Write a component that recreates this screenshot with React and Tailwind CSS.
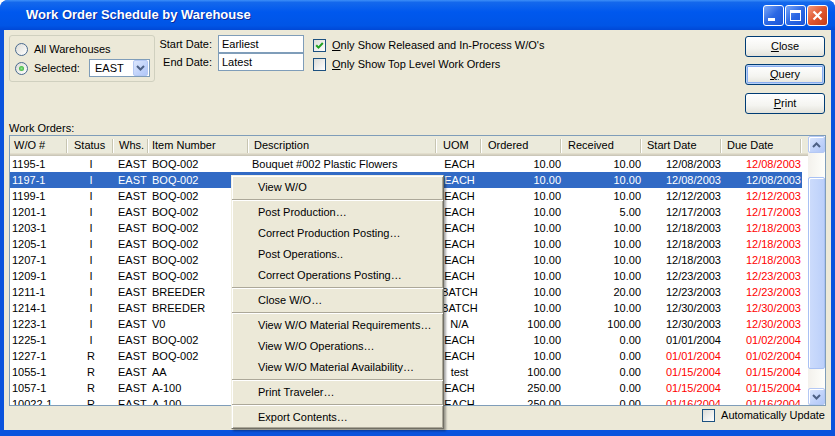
import React from 'react';

const rows = [
  ['1195-1', 'I', 'BOQ-002', 'Bouquet #002 Plastic Flowers', 'EACH', '10.00', '10.00', '12/08/2003', '12/08/2003', false],
  ['1197-1', 'I', 'BOQ-002', '', 'EACH', '10.00', '10.00', '12/08/2003', '12/08/2003', false],
  ['1199-1', 'I', 'BOQ-002', '', 'EACH', '10.00', '10.00', '12/12/2003', '12/12/2003', false],
  ['1201-1', 'I', 'BOQ-002', '', 'EACH', '10.00', '5.00', '12/17/2003', '12/17/2003', false],
  ['1203-1', 'I', 'BOQ-002', '', 'EACH', '10.00', '10.00', '12/18/2003', '12/18/2003', false],
  ['1205-1', 'I', 'BOQ-002', '', 'EACH', '10.00', '10.00', '12/18/2003', '12/18/2003', false],
  ['1207-1', 'I', 'BOQ-002', '', 'EACH', '10.00', '10.00', '12/18/2003', '12/18/2003', false],
  ['1209-1', 'I', 'BOQ-002', '', 'EACH', '10.00', '10.00', '12/23/2003', '12/23/2003', false],
  ['1211-1', 'I', 'BREEDER', '', 'BATCH', '10.00', '20.00', '12/23/2003', '12/23/2003', false],
  ['1214-1', 'I', 'BREEDER', '', 'BATCH', '10.00', '10.00', '12/30/2003', '12/30/2003', false],
  ['1223-1', 'I', 'V0', '', 'N/A', '100.00', '100.00', '12/30/2003', '12/30/2003', false],
  ['1225-1', 'I', 'BOQ-002', '', 'EACH', '10.00', '0.00', '01/01/2004', '01/02/2004', false],
  ['1227-1', 'R', 'BOQ-002', '', 'EACH', '10.00', '0.00', '01/01/2004', '01/02/2004', true],
  ['1055-1', 'R', 'AA', '', 'test', '100.00', '0.00', '01/15/2004', '01/15/2004', true],
  ['1057-1', 'R', 'A-100', '', 'EACH', '250.00', '0.00', '01/15/2004', '01/15/2004', true],
  ['10022-1', 'R', 'A-100', '', 'EACH', '250.00', '0.00', '01/16/2004', '01/16/2004', true],
];

const headers = [
  ['W/O #', 'w-[58px] pl-[4px]'],
  ['Status', 'w-[46px] pl-[6px]'],
  ['Whs.', 'w-[35px] pl-[5px]'],
  ['Item Number', 'w-[100px] pl-[3px]'],
  ['Description', 'w-[188px] pl-[5px]'],
  ['UOM', 'w-[45px] pl-[6px]'],
  ['Ordered', 'w-[80px] pl-[6px]'],
  ['Received', 'w-[80px] pl-[6px]'],
  ['Start Date', 'w-[80px] pl-[5px]'],
  ['Due Date', 'w-[80px] pl-[5px]'],
];

function Check({ checked }) {
  return (
    <span className="flex h-[13px] w-[13px] shrink-0 items-center justify-center border border-[#1c5180] bg-[linear-gradient(135deg,#dcdcd7,#ffffff)]">
      {checked && (
        <svg viewBox="0 0 11 11" className="h-[11px] w-[11px]">
          <path d="M2.2 5.2 L4.5 7.6 L8.8 3" stroke="#21a121" strokeWidth="2" fill="none" />
        </svg>
      )}
    </span>
  );
}

function Radio({ checked }) {
  return (
    <span className="flex h-[13px] w-[13px] shrink-0 items-center justify-center rounded-full border border-[#4a6a8f] bg-[linear-gradient(135deg,#dcdcd7,#ffffff)]">
      {checked && <span className="h-[5px] w-[5px] rounded-full bg-[radial-gradient(circle,#8ee68e,#21a121)]" />}
    </span>
  );
}

function XpButton({ children, focused }) {
  return (
    <div
      className={`flex h-[21px] w-[80px] items-center justify-center rounded-[3px] border border-[#003c74] bg-[linear-gradient(to_bottom,#ffffff,#f4f4f0_60%,#e3e2da)] text-[11px] text-black ${
        focused ? 'shadow-[inset_0_0_0_1px_#b9d1f6,inset_0_0_0_2px_#89adf0]' : ''
      }`}
    >
      {children}
    </div>
  );
}

function ArrowBtn({ up }) {
  return (
    <div className="flex h-[17px] w-[17px] shrink-0 items-center justify-center rounded-[2px] border border-[#b4c8f4] bg-[linear-gradient(135deg,#dbe6fd,#c0d2fa_60%,#b1c7f8)] shadow-[inset_1px_1px_0_#ffffff]">
      <svg viewBox="0 0 9 6" className="h-[6px] w-[9px]">
        <path d={up ? 'M1 5 L4.5 1.5 L8 5' : 'M1 1 L4.5 4.5 L8 1'} stroke="#4d6185" strokeWidth="2" fill="none" />
      </svg>
    </div>
  );
}

function MenuItem({ children }) {
  return <div className="h-[21px] pl-[26px] leading-[21px] whitespace-nowrap">{children}</div>;
}

function MenuSep() {
  return (
    <div className="flex h-[4px] flex-col justify-center">
      <div className="h-[1px] bg-[#aca899]" />
      <div className="h-[1px] bg-white" />
    </div>
  );
}

export default function App() {
  return (
    <div className="relative h-[436px] w-[835px] overflow-hidden bg-white font-['Liberation_Sans',Arial,sans-serif] text-[11px] text-black">
      <div className="flex h-full w-full flex-col overflow-hidden rounded-t-[8px] bg-[#0a53dd]">
        {/* Title bar */}
        <div className="flex h-[30px] shrink-0 items-center bg-[linear-gradient(to_bottom,#3d8ff8_0%,#1468ec_8%,#0058ee_40%,#0055e6_85%,#0048d6_100%)]">
          <div className="pl-[26px] text-[13px] font-bold text-white [text-shadow:1px_1px_0_#0a2a9a]">
            Work Order Schedule by Warehouse
          </div>
          <div className="ml-auto flex gap-[1px] pr-[7px]">
            <div className="flex h-[21px] w-[21px] items-end rounded-[3px] border border-white bg-[linear-gradient(135deg,#7aa7f8,#2c68e4_50%,#1b55d8)] pb-[4px] pl-[4px]">
              <span className="h-[3px] w-[7px] bg-white" />
            </div>
            <div className="flex h-[21px] w-[21px] items-center justify-center rounded-[3px] border border-white bg-[linear-gradient(135deg,#7aa7f8,#2c68e4_50%,#1b55d8)]">
              <span className="h-[11px] w-[11px] border border-t-[3px] border-white" />
            </div>
            <div className="flex h-[21px] w-[21px] items-center justify-center rounded-[3px] border border-white bg-[linear-gradient(135deg,#f29a7d,#e1572f_50%,#c63d17)]">
              <svg viewBox="0 0 11 11" className="h-[11px] w-[11px]">
                <path d="M1.5 1.5 L9.5 9.5 M9.5 1.5 L1.5 9.5" stroke="#ffffff" strokeWidth="2.2" fill="none" />
              </svg>
            </div>
          </div>
        </div>

        {/* Client */}
        <div className="flex flex-1 flex-col px-[4px] pb-[6px]">
          <div className="flex flex-1 flex-col bg-[#ece9d8]">
            {/* Top controls */}
            <div className="flex h-[91px] shrink-0 items-start pl-[5px] pr-[6px]">
              <div className="mt-[5px] flex h-[47px] w-[146px] flex-col rounded-[3px] border border-[#d0d0bf] pl-[5px] pr-[4px] pt-[4px]">
                <div className="flex h-[18px] items-center">
                  <Radio />
                  <span className="ml-[6px]">All Warehouses</span>
                </div>
                <div className="flex h-[20px] items-center">
                  <Radio checked />
                  <span className="ml-[6px]">Selected:</span>
                  <div className="ml-auto flex h-[18px] w-[61px] items-center border border-[#7f9db9] bg-white">
                    <span className="pl-[5px]">EAST</span>
                    <div className="ml-auto mr-[1px] flex h-[16px] w-[15px] items-center justify-center rounded-[2px] border border-[#b4c8f4] bg-[linear-gradient(135deg,#dbe6fd,#c0d2fa_60%,#b1c7f8)]">
                      <svg viewBox="0 0 9 6" className="h-[6px] w-[9px]">
                        <path d="M1 1 L4.5 4.5 L8 1" stroke="#4d6185" strokeWidth="2" fill="none" />
                      </svg>
                    </div>
                  </div>
                </div>
              </div>

              <div className="mt-[5px] flex flex-col">
                <div className="flex h-[18px] items-center">
                  <span className="w-[57px] text-right">Start Date:</span>
                  <div className="ml-[6px] flex h-[18px] w-[86px] items-center border border-[#7f9db9] bg-white pl-[3px]">Earliest</div>
                </div>
                <div className="flex h-[18px] items-center">
                  <span className="w-[57px] text-right">End Date:</span>
                  <div className="ml-[6px] flex h-[18px] w-[86px] items-center border border-[#7f9db9] bg-white pl-[3px]">Latest</div>
                </div>
              </div>

              <div className="ml-[9px] mt-[6px] flex flex-col">
                <div className="flex h-[19px] items-center">
                  <Check checked />
                  <span className="ml-[6px]">
                    <span className="underline">O</span>nly Show Released and In-Process W/O's
                  </span>
                </div>
                <div className="flex h-[19px] items-center">
                  <Check />
                  <span className="ml-[6px]">
                    <span className="underline">O</span>nly Show Top Level Work Orders
                  </span>
                </div>
              </div>

              <div className="ml-auto flex flex-col">
                <div className="mt-[6px]">
                  <XpButton>
                    <span className="underline">C</span>lose
                  </XpButton>
                </div>
                <div className="mt-[7px]">
                  <XpButton focused>
                    <span className="underline">Q</span>uery
                  </XpButton>
                </div>
                <div className="mt-[8px]">
                  <XpButton>
                    <span className="underline">P</span>rint
                  </XpButton>
                </div>
              </div>
            </div>

            <div className="h-[14px] shrink-0 pl-[5px] leading-[14px]">Work Orders:</div>

            {/* Table */}
            <div className="ml-[5px] flex h-[271px] w-[817px] shrink-0 border border-[#7f9db9] bg-white">
              <div className="flex w-[798px] flex-col overflow-hidden">
                <div className="flex h-[20px] shrink-0 bg-[#ebeadb] shadow-[inset_0_-1px_0_#cbc7b8,inset_0_-2px_0_#d6d2c2,inset_0_-3px_0_#e2decd]">
                  {headers.map(([label, cls]) => (
                    <div key={label} className={`flex h-[20px] shrink-0 items-center pb-[2px] ${cls}`}>
                      <span className="whitespace-nowrap">{label}</span>
                      <span className="ml-auto mt-[2px] flex h-[14px]">
                        <span className="w-[1px] bg-[#c7c5b2]" />
                        <span className="w-[1px] bg-white" />
                      </span>
                    </div>
                  ))}
                </div>
                <div className="flex flex-col">
                  {rows.map((r, i) => {
                    const sel = i === 1;
                    return (
                      <div key={r[0]} className={`flex h-[16px] shrink-0 leading-[16px] ${sel ? 'text-white' : 'text-black'}`}>
                        <div className={`flex w-[792px] ${sel ? 'bg-[#316ac5]' : ''}`}>
                          <span className="w-[58px] shrink-0 whitespace-nowrap pl-[2px]">{r[0]}</span>
                          <span className="w-[46px] shrink-0 text-center">{r[1]}</span>
                          <span className="w-[35px] shrink-0 pl-[4px]">EAST</span>
                          <span className="w-[100px] shrink-0 whitespace-nowrap pl-[3px]">{r[2]}</span>
                          <span className="w-[188px] shrink-0 overflow-hidden whitespace-nowrap pl-[3px]">{r[3]}</span>
                          <span className="w-[45px] shrink-0 text-center">{r[4]}</span>
                          <span className="w-[80px] shrink-0 pr-[1px] text-right">{r[5]}</span>
                          <span className="w-[80px] shrink-0 pr-[1px] text-right">{r[6]}</span>
                          <span className={`w-[80px] shrink-0 pr-[1px] text-right ${!sel && r[9] ? 'text-[#ff0000]' : ''}`}>{r[7]}</span>
                          <span className={`w-[80px] shrink-0 pr-[1px] text-right ${!sel ? 'text-[#ff0000]' : ''}`}>{r[8]}</span>
                        </div>
                      </div>
                    );
                  })}
                </div>
              </div>
              {/* Scrollbar */}
              <div className="flex w-[17px] flex-col bg-[linear-gradient(to_right,#f3f1ec,#fefefb)]">
                <ArrowBtn up />
                <div className="h-[24px] shrink-0" />
                <div className="h-[192px] shrink-0 rounded-[2px] border border-[#a9c1f4] bg-[linear-gradient(to_right,#cddcfc,#bcd0fa)] shadow-[inset_1px_1px_0_#ffffff]" />
                <div className="flex-1" />
                <ArrowBtn />
              </div>
            </div>

            {/* Bottom */}
            <div className="flex h-[24px] shrink-0 items-start justify-end pr-[6px] pt-[3px]">
              <div className="flex h-[13px] items-center">
                <Check />
                <span className="ml-[6px]">Automatically Update</span>
              </div>
            </div>
          </div>
        </div>
      </div>

      {/* Context menu */}
      <div className="absolute left-[231px] top-[175px] w-[213px] border border-b-[#716f64] border-l-[#f1efe2] border-r-[#716f64] border-t-[#f1efe2] bg-[#ece9d8] pt-[1px] shadow-[inset_1px_1px_0_#ffffff,inset_-1px_-1px_0_#aca899,2px_2px_2px_rgba(0,0,0,0.35)]">
        <MenuItem>View W/O</MenuItem>
        <MenuSep />
        <MenuItem>Post Production…</MenuItem>
        <MenuItem>Correct Production Posting…</MenuItem>
        <MenuItem>Post Operations..</MenuItem>
        <MenuItem>Correct Operations Posting…</MenuItem>
        <MenuSep />
        <MenuItem>Close W/O…</MenuItem>
        <MenuSep />
        <MenuItem>View W/O Material Requirements…</MenuItem>
        <MenuItem>View W/O Operations…</MenuItem>
        <MenuItem>View W/O Material Availability…</MenuItem>
        <MenuSep />
        <MenuItem>Print Traveler…</MenuItem>
        <MenuSep />
        <MenuItem>Export Contents…</MenuItem>
      </div>
    </div>
  );
}
